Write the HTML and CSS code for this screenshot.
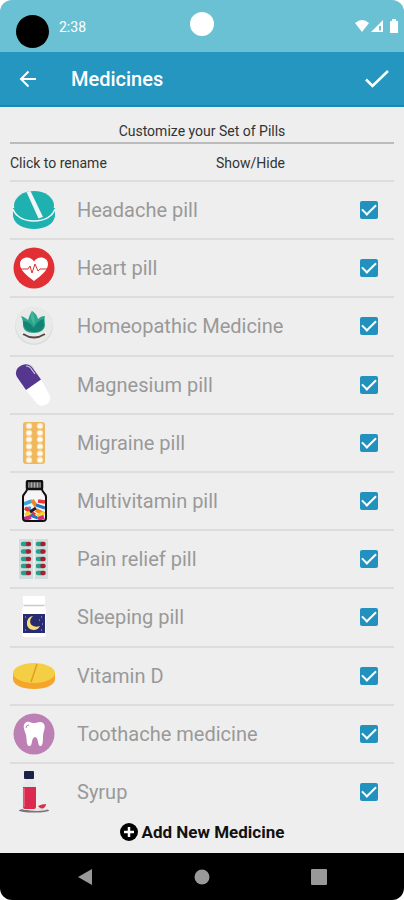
FILE: index.html
```html
<!DOCTYPE html>
<html lang="en">
<head>
    <meta charset="UTF-8">
    <meta name="viewport" content="width=device-width, initial-scale=1.0">
    <title>Medicines</title>
    <link rel="stylesheet" href="styles.css">
</head>
<body>
    <div class="phone">
        <div class="status-bar">
            <div class="status-left">
                <span class="app-dot"></span>
                <span class="time">2:38</span>
            </div>
            <span class="camera"></span>
            <svg class="status-icons" width="44" height="14" viewBox="0 0 44 14" fill="#fff">
                <path d="M0 4Q7-2 14 4L7 13z"/>
                <path d="M28 1V13H16zM24 7V11.500H26V7z" fill-rule="evenodd"/>
                <path d="M36 2h1V0h4v2h2v12h-8V3q0-1 1-1z"/>
            </svg>
        </div>

        <header class="app-bar">
            <button class="icon-btn" aria-label="Back">
                <svg width="18" height="18" viewBox="0 0 18 18" fill="none" stroke="#fff" stroke-width="2"><path d="M17 9H2.500M9.500 1.500L2 9l7.500 7.500"/></svg>
            </button>
            <h1>Medicines</h1>
            <button class="icon-btn" aria-label="Save">
                <svg width="24" height="18" viewBox="0 0 24 18" fill="none" stroke="#fff" stroke-width="2.500"><path d="M1 9.500L7.500 16 23 1"/></svg>
            </button>
        </header>

        <main class="content">
            <h2 class="subtitle">Customize your Set of Pills</h2>
            <div class="columns">
                <span>Click to rename</span>
                <span>Show/Hide</span>
            </div>

            <ul class="pill-list">
                <li class="pill-row">
                    <svg class="pill-icon" viewBox="0 0 42 42">
                        <path d="M0 19v8c1 8 10 13 21 13s20-5 21-13v-8z" fill="#1eb1af"/>
                        <ellipse cx="21" cy="16.500" rx="20" ry="14.500" fill="#1eb1af"/>
                        <path d="M0 20c2 7 10 12 21 12s19-5 21-12" fill="none" stroke="#eef8f8" stroke-width="1.600"/>
                        <path d="M13.500 3l4-1L30 28l-4.500 1.500z" fill="#f1f5f5"/>
                    </svg>
                    <input class="pill-name" type="text" value="Headache pill" aria-label="Rename Headache pill">
                    <input class="pill-check" type="checkbox" checked aria-label="Show Headache pill">
                </li>
                <li class="pill-row">
                    <svg class="pill-icon" viewBox="0 0 42 42">
                        <circle cx="21" cy="21" r="20.500" fill="#e12f34"/>
                        <path d="M21 34C13 28 7 23 7 17c0-7 10-9 14-2.500C25 8 35 10 35 17c0 6-6 11-14 17z" fill="#fff"/>
                        <path d="M7 22h8l2-3 2 7 3-9 3 7 2-2h8" fill="none" stroke="#e12f34" stroke-width="1"/>
                    </svg>
                    <input class="pill-name" type="text" value="Heart pill" aria-label="Rename Heart pill">
                    <input class="pill-check" type="checkbox" checked aria-label="Show Heart pill">
                </li>
                <li class="pill-row">
                    <svg class="pill-icon" viewBox="0 0 42 42">
                        <circle cx="21" cy="21" r="19" fill="#d9dcdb"/>
                        <circle cx="21" cy="20" r="18.500" fill="#e8eae9"/>
                        <path d="M9 27q11 10 24 0v2q-11 8-24 0z" fill="#fff"/>
                        <path d="M8 11c3 1 5 2 7 4 1-3 2-6 4-9 3 2 5 4 6 8 2-2 4-3 7-3-1 3 0 6 0 9 0 5-5 8-11 8-7 0-11-3-11-8 0-3 0-5-2-9z" fill="#2ba58d"/>
                        <path d="M10 16c6 0 9 4 11 7 1-4 5-8 10-9-1 3 0 5 0 7-1 4-5 6-10 6-7 0-11-4-11-11z" fill="#138473"/>
                        <path d="M19 6c-2 5-1 9 2 14 2-5 0-10-2-14z" fill="#43b69c"/>
                        <path d="M10 29q11 7 22 0" fill="none" stroke="#5b4742" stroke-width="2"/>
                    </svg>
                    <input class="pill-name" type="text" value="Homeopathic Medicine" aria-label="Rename Homeopathic Medicine">
                    <input class="pill-check" type="checkbox" checked aria-label="Show Homeopathic Medicine">
                </li>
                <li class="pill-row">
                    <svg class="pill-icon" viewBox="0 0 42 42">
                        <path d="M13 26L28 15.500 36 30c5 8-7 16-12.500 9z" fill="#fff"/>
                        <path d="M13 26L4 13C-1 4 13-4 19 3l9 12.500z" fill="#563790"/>
                        <path d="M13 2q4 0 6 4l3 4M17 1q3 1 4 4" fill="none" stroke="#d5c9e8" stroke-width="1.200"/>
                    </svg>
                    <input class="pill-name" type="text" value="Magnesium pill" aria-label="Rename Magnesium pill">
                    <input class="pill-check" type="checkbox" checked aria-label="Show Magnesium pill">
                </li>
                <li class="pill-row">
                    <svg class="pill-icon" viewBox="0 0 42 42">
                        <rect x="10" y="0" width="22" height="42" rx="3" fill="#f0b75d"/>
                        <path d="M16 4v0M27 4v0M16 11v0M27 11v0M16 17.500v0M27 17.500v0M16 24.500v0M27 24.500v0M16 31.500v0M27 31.500v0M16 38v0M27 38v0" stroke="#f9dda9" stroke-width="6.500" stroke-linecap="round"/>
                        <path d="M15.500 4h1M26.500 4h1M15.500 11h1M26.500 11h1M15.500 17.500h1M26.500 17.500h1M15.500 24.500h1M26.500 24.500h1M15.500 31.500h1M26.500 31.500h1M15.500 38h1M26.500 38h1" stroke="#fffaf0" stroke-width="4" stroke-linecap="round"/>
                    </svg>
                    <input class="pill-name" type="text" value="Migraine pill" aria-label="Rename Migraine pill">
                    <input class="pill-check" type="checkbox" checked aria-label="Show Migraine pill">
                </li>
                <li class="pill-row">
                    <svg class="pill-icon" viewBox="0 0 42 42">
                        <path d="M14 9h15c0 4 4 4 4 8v21q0 3-3 3H13q-3 0-3-3V17c0-4 4-4 4-8z" fill="#f4f6f7"/>
                        <path d="M11 24l8-3M12 29l6-1" stroke="#39a5de" stroke-width="3.500"/>
                        <path d="M19 20l4 6M23 30l8 4" stroke="#f38424" stroke-width="4"/>
                        <path d="M25 21l7 1M12 28l10 7" stroke="#ef3435" stroke-width="3.500"/>
                        <path d="M23 25l9 3M17 35l8 3" stroke="#2376c2" stroke-width="3"/>
                        <path d="M12 35l6-3M24 36l7-3" stroke="#f6d42c" stroke-width="4"/>
                        <path d="M11 39l7-2M25 39l6-2" stroke="#cf2f86" stroke-width="4"/>
                        <path d="M17 32l6-4" stroke="#221b2e" stroke-width="3"/>
                        <path d="M14 9h15c0 4 4 4 4 8v21q0 3-3 3H13q-3 0-3-3V17c0-4 4-4 4-8z" fill="none" stroke="#111" stroke-width="2"/>
                        <rect x="14" y="1" width="15" height="8" rx="1" fill="#aaa" stroke="#111" stroke-width="2.500"/>
                        <path d="M17 2v6M20 2v6M23 2v6M26 2v6" stroke="#333"/>
                    </svg>
                    <input class="pill-name" type="text" value="Multivitamin pill" aria-label="Rename Multivitamin pill">
                    <input class="pill-check" type="checkbox" checked aria-label="Show Multivitamin pill">
                </li>
                <li class="pill-row">
                    <svg class="pill-icon" viewBox="0 0 42 42">
                        <path d="M6 1h14v40H6zM22 1h13v40H22z" fill="#cfdedd"/>
                        <path d="M10 6h4M10 13.500h4M10 21h4M10 28h4M10 35h4M25 6h4M25 13.500h4M25 21h4M25 28h4M25 35h4" stroke="#26a08a" stroke-width="4.500" stroke-linecap="round"/>
                        <path d="M15 6h1M15 13.500h1M15 21h1M15 28h1M15 35h1M29.500 6h1M29.500 13.500h1M29.500 21h1M29.500 28h1M29.500 35h1" stroke="#a51f30" stroke-width="4.500" stroke-linecap="round"/>
                    </svg>
                    <input class="pill-name" type="text" value="Pain relief pill" aria-label="Rename Pain relief pill">
                    <input class="pill-check" type="checkbox" checked aria-label="Show Pain relief pill">
                </li>
                <li class="pill-row">
                    <svg class="pill-icon" viewBox="0 0 42 42">
                        <path d="M10 0h22v8h-1v2q2 1 2 4v24q0 3-3 3H12q-3 0-3-3V14q0-3 2-4V8h-1z" fill="#fff"/>
                        <path d="M11 9.500h20" stroke="#c9c9c9" stroke-width="1.500"/>
                        <rect x="10" y="18" width="22" height="19" fill="#292b70"/>
                        <path d="M20 20c-6 5-2 13 7 10-3 7-14 4-13-3 0-4 3-7 6-7z" fill="#f7df76"/>
                        <path d="M12 21h1M28 21h1M26 24h1M12 34h1M29 28h1M28 34h1" stroke="#b8b6dc"/>
                    </svg>
                    <input class="pill-name" type="text" value="Sleeping pill" aria-label="Rename Sleeping pill">
                    <input class="pill-check" type="checkbox" checked aria-label="Show Sleeping pill">
                </li>
                <li class="pill-row">
                    <svg class="pill-icon" viewBox="0 0 42 42">
                        <path d="M0 18v6c0 6 9 10 21 10s21-4 21-10v-6z" fill="#f5a52b"/>
                        <ellipse cx="21" cy="18" rx="21" ry="10" fill="#f4cf43"/>
                        <path d="M24 9l-6 18" stroke="#e59a2a" stroke-width="1.500"/>
                    </svg>
                    <input class="pill-name" type="text" value="Vitamin D" aria-label="Rename Vitamin D">
                    <input class="pill-check" type="checkbox" checked aria-label="Show Vitamin D">
                </li>
                <li class="pill-row">
                    <svg class="pill-icon" viewBox="0 0 42 42">
                        <circle cx="21" cy="21" r="20.500" fill="#bc80b5"/>
                        <path d="M12 10c3-3 6 0 9 0s7-3 10 1c2 4-1 8-1 12s0 9-2 10c-4 1-2-9-6-9s-2 10-6 9c-3-1-2-7-3-11s-4-8-1-12z" fill="#fff"/>
                        <path d="M13 15q0-3 3-3" fill="none" stroke="#bc80b5" stroke-width="1"/>
                    </svg>
                    <input class="pill-name" type="text" value="Toothache medicine" aria-label="Rename Toothache medicine">
                    <input class="pill-check" type="checkbox" checked aria-label="Show Toothache medicine">
                </li>
                <li class="pill-row">
                    <svg class="pill-icon" viewBox="0 0 42 42">
                        <ellipse cx="21" cy="39.500" rx="15" ry="2" fill="#77777b"/>
                        <ellipse cx="24" cy="38.500" rx="10" ry="1.500" fill="#e4e5e6"/>
                        <path d="M12 8h8c0 4 3 5 3 9v19q0 3-3 3h-8q-3 0-3-3V17c0-4 3-5 3-9z" fill="#e4eaeb"/>
                        <path d="M10 16h13v20q0 2-2 2h-9q-2 0-2-2z" fill="#dc294e"/>
                        <path d="M11 17v19" stroke="#ee6881" stroke-width="1.500"/>
                        <rect x="11" y="0" width="10" height="8" rx="1" fill="#1b2145"/>
                        <path d="M25 35q4-2 8-2c0 5-6 6-8 2z" fill="#d7314d"/>
                    </svg>
                    <input class="pill-name" type="text" value="Syrup" aria-label="Rename Syrup">
                    <input class="pill-check" type="checkbox" checked aria-label="Show Syrup">
                </li>
            </ul>

            <button class="add-btn">
                <svg width="18" height="18" viewBox="0 0 18 18"><circle cx="9" cy="9" r="9" fill="#000"/><path d="M9 4v10M4 9h10" stroke="#fff" stroke-width="2.500"/></svg>
                Add New Medicine
            </button>
        </main>

        <nav class="nav-bar">
            <button aria-label="Back"><svg width="16" height="18" viewBox="0 0 16 18" fill="#999"><path d="M1 9L15 1v16z"/></svg></button>
            <button aria-label="Home"><svg width="16" height="16" viewBox="0 0 16 16" fill="#999"><circle cx="8" cy="8" r="7.500"/></svg></button>
            <button aria-label="Recent apps"><svg width="16" height="16" viewBox="0 0 16 16" fill="#999"><rect width="16" height="16" rx="1"/></svg></button>
        </nav>
    </div>
</body>
</html>
```
FILE: styles.css
```css
* {
    box-sizing: border-box;
    margin: 0;
    padding: 0;
}

body {
    font-family: Roboto, sans-serif;
    background-color: #ffffff;
    color: #333333;
}

button {
    background: none;
    border: none;
    cursor: pointer;
    font-family: inherit;
}

svg {
    display: block;
}

.phone {
    display: flex;
    flex-direction: column;
    min-height: 100vh;
    background-color: #eeeeee;
    border-radius: 12px;
    overflow: hidden;
}

.status-bar {
    display: grid;
    grid-template-columns: 1fr 24px 1fr;
    align-items: center;
    height: 52px;
    padding: 0 5px 4px;
    background-color: #6ac1d4;
}

.status-left {
    display: flex;
    align-items: center;
    gap: 10px;
    padding-left: 11px;
}

.app-dot {
    width: 33px;
    height: 33px;
    margin-top: 14px;
    border-radius: 50%;
    background-color: #000000;
}

.time {
    padding-top: 6px;
    color: #ffffff;
    font-size: 14px;
}

.camera {
    width: 24px;
    height: 24px;
    border-radius: 50%;
    background-color: #ffffff;
}

.status-icons {
    justify-self: end;
    margin-top: 4px;
}

.app-bar {
    display: flex;
    align-items: center;
    height: 55px;
    padding: 0 15px 0 19px;
    background-color: #2496bf;
    border-bottom: 2px solid #168bb5;
    color: #ffffff;
}

.app-bar h1 {
    flex: 1;
    padding-left: 34px;
    font-size: 20px;
    font-weight: 500;
}

.content {
    flex: 1;
    display: flex;
    flex-direction: column;
    padding: 15px 10px 0;
}

.subtitle {
    padding-bottom: 2px;
    border-bottom: 2px solid #bbbbbb;
    font-size: 14px;
    font-weight: 400;
    line-height: 18px;
    text-align: center;
}

.columns {
    display: grid;
    grid-template-columns: 206px 1fr;
    padding: 10px 0 8px;
    font-size: 14px;
    line-height: 18px;
}

.pill-list {
    flex: 1;
    display: flex;
    flex-direction: column;
    list-style: none;
}

.pill-row {
    flex: 1;
    display: flex;
    align-items: center;
    min-height: 58px;
    padding: 0 16px 0 3px;
    border-top: 2px solid #dddddd;
}

.pill-icon {
    width: 42px;
    height: 42px;
}

.pill-name {
    flex: 1;
    min-width: 0;
    padding: 0 22px;
    border: none;
    background: none;
    color: #999999;
    font-family: inherit;
    font-size: 20px;
}

.pill-check {
    appearance: none;
    display: grid;
    place-items: center;
    width: 18px;
    height: 18px;
    border-radius: 2px;
    background-color: #2291bd;
    cursor: pointer;
}

.pill-check:checked::after {
    content: "";
    width: 12px;
    height: 6px;
    border-left: 2px solid #ffffff;
    border-bottom: 2px solid #ffffff;
    transform: translateY(-2px) rotate(-45deg);
}

.add-btn {
    display: flex;
    justify-content: center;
    align-items: center;
    gap: 4px;
    height: 33px;
    padding-bottom: 10px;
    color: #111111;
    font-size: 17px;
    font-weight: 700;
}

.nav-bar {
    display: flex;
    justify-content: space-between;
    align-items: center;
    height: 47px;
    padding: 0 77px;
    background-color: #000000;
}
```
